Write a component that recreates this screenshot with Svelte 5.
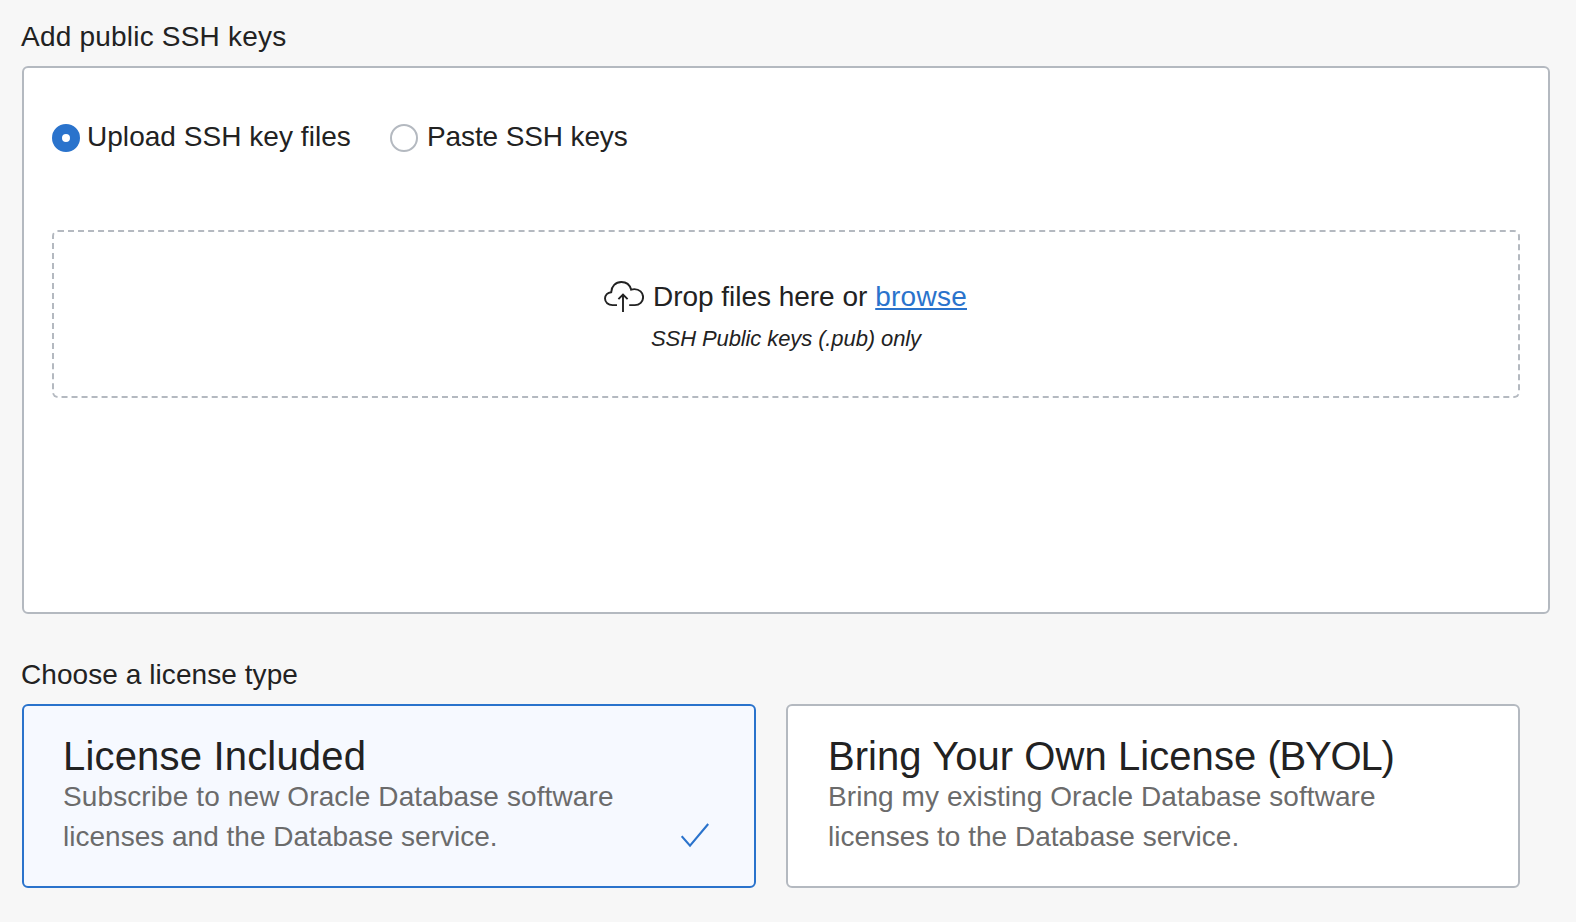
<script>
  let keyMode = $state('upload');
  let license = $state('included');

  const modes = [
    { id: 'upload', label: 'Upload SSH key files', tracking: 0.04 },
    { id: 'paste', label: 'Paste SSH keys', tracking: -0.12 }
  ];

  const licenses = [
    {
      id: 'included',
      title: [{ text: 'License Included', tracking: 0.18 }],
      lines: [
        { text: 'Subscribe to new Oracle Database software', tracking: 0.105 },
        { text: 'licenses and the Database service.', tracking: 0.01 }
      ]
    },
    {
      id: 'byol',
      title: [
        { text: 'Bring Your Own License ', tracking: 0.06 },
        { text: '(BYOL)', tracking: -1.2 }
      ],
      lines: [
        { text: 'Bring my existing Oracle Database software', tracking: 0.07 },
        { text: 'licenses to the Database service.', tracking: 0.01 }
      ]
    }
  ];
</script>

<main>
  <h2 class="keys-title">Add public SSH keys</h2>
  <section class="panel">
    <div class="modes" role="radiogroup">
      {#each modes as m}
        <button class="mode" role="radio" aria-checked={keyMode === m.id} onclick={() => (keyMode = m.id)}>
          <span class="dot" class:on={keyMode === m.id}></span>
          <span class="mode-label" style="letter-spacing: {m.tracking}px">{m.label}</span>
        </button>
      {/each}
    </div>
    <div class="drop">
      <div class="drop-line">
        <svg class="cloud" width="40" height="31" viewBox="0 0 40 31" fill="none" stroke="#222" stroke-width="1.9">
          <path d="M13 24.1H8.6C4.2 24.1 1 21.3 1 17.6c0-3.5 2.7-6.2 6.2-6.4C7.400 5.400 11.600 1 17.300 1c4.900 0 8.600 3 9.900 7.700 1.100-.4 2-.6 3.200-.6 4.900 0 8.700 3.500 8.700 8 0 4.600-3.500 8-8.300 8H25.200" />
          <path d="M19 31V13.800M14.400 18.200L19 13.600l4.600 4.600" />
        </svg>
        <span class="drop-text">Drop files here or</span>
        <a class="browse" href="#browse">browse</a>
      </div>
      <div class="hint">SSH Public keys (.pub) only</div>
    </div>
  </section>

  <h2 class="license-title">Choose a license type</h2>
  <div class="cards">
    {#each licenses as l}
      <button class="card" class:selected={license === l.id} onclick={() => (license = l.id)}>
        <span class="card-text">
          <span class="name">{#each l.title as part}<span style="letter-spacing: {part.tracking}px">{part.text}</span>{/each}</span>
          {#each l.lines as line}
            <span class="desc" style="letter-spacing: {line.tracking}px">{line.text}</span>
          {/each}
        </span>
        {#if license === l.id}
          <svg class="check" width="28" height="25" viewBox="0 0 28 25" fill="none" stroke="#2a73cc" stroke-width="2.1">
            <path d="M.7 13.200L9 22.600 27.200 1" />
          </svg>
        {/if}
      </button>
    {/each}
  </div>
</main>

<style>
  :global(body) {
    background: #f7f7f7;
  }
  main {
    box-sizing: border-box;
    height: 922px;
    padding: 17px 26px 0 22px;
    font-family: 'Liberation Sans', Arial, sans-serif;
    font-size: 28px;
    line-height: 40px;
    color: #222;
    white-space: nowrap;
  }
  h2 {
    margin: 0 0 0 -1px;
    font-size: 28px;
    font-weight: 400;
    line-height: 40px;
  }
  .keys-title {
    height: 49px;
    letter-spacing: 0.21px;
  }
  button {
    padding: 0;
    border: 0;
    background: none;
    font: inherit;
    color: inherit;
    text-align: left;
  }
  .panel {
    box-sizing: border-box;
    height: 548px;
    padding: 49px 28px 0;
    border: 2px solid #b4b9c0;
    border-radius: 6px;
    background: #fff;
  }
  .modes {
    display: flex;
    gap: 38px;
    height: 113px;
  }
  .mode {
    display: flex;
    height: 40px;
    gap: 9px;
  }
  .mode:first-child {
    width: 300px;
    gap: 7px;
  }
  .dot {
    box-sizing: border-box;
    flex: none;
    width: 28px;
    height: 28px;
    margin-top: 7px;
    border: 2px solid #b4b9c0;
    border-radius: 50%;
  }
  .dot.on {
    border: 10px solid #2a73cc;
  }
  .drop {
    box-sizing: border-box;
    height: 168px;
    padding-top: 45px;
    border: 2px dashed #b4b9c0;
    border-radius: 6px;
    text-align: center;
  }
  .drop-line {
    display: flex;
    justify-content: center;
    height: 40px;
  }
  .cloud {
    margin: 4px 9px 0 0;
  }
  .drop-text {
    letter-spacing: -0.03px;
  }
  .browse {
    margin: 0 1px 0 8px;
    color: #2a73cc;
    letter-spacing: 0.25px;
    text-decoration: underline;
    text-decoration-thickness: 2px;
    text-underline-offset: 2px;
    text-decoration-skip-ink: none;
  }
  .hint {
    margin-top: 1px;
    font-size: 22px;
    font-style: italic;
    line-height: 42px;
    letter-spacing: -0.1px;
  }
  .license-title {
    height: 49px;
    margin-top: 41px;
    letter-spacing: 0.07px;
  }
  .cards {
    display: grid;
    grid-template-columns: 734px 734px;
    gap: 30px;
  }
  .card {
    display: flex;
    justify-content: space-between;
    align-items: flex-start;
    box-sizing: border-box;
    height: 184px;
    padding: 30px 45px 0 40px;
    border: 2px solid #b4b9c0;
    border-radius: 6px;
    background: #fff;
  }
  .card:first-child {
    padding-left: 39px;
  }
  .card.selected {
    border-color: #2a73cc;
    background: #f6f9ff;
  }
  .card-text {
    display: flex;
    flex-direction: column;
  }
  .name {
    height: 41px;
    font-size: 40px;
    line-height: 40px;
    white-space: pre;
  }
  .desc {
    color: #6b6b6b;
  }
  .check {
    margin-top: 87px;
  }
</style>
